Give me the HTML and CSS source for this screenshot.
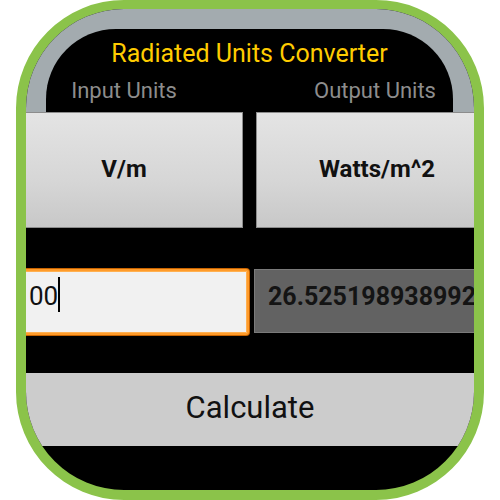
FILE: index.html
```html
<!DOCTYPE html>
<html>
<head>
<meta charset="utf-8">
<link rel="stylesheet" href="styles.css">
</head>
<body>
<div class="icon">
  <div class="bezel">
    <div class="panel">
      <div class="title">Radiated Units Converter</div>
      <div class="labels">
        <div>Input Units</div>
        <div>Output Units</div>
      </div>
    </div>
  </div>
  <div class="units">
    <div class="unit-btn">V/m</div>
    <div class="unit-btn">Watts/m^2</div>
  </div>
  <div class="fields">
    <div class="input">00<span class="cursor"></span></div>
    <div class="output">26.525198938992</div>
  </div>
  <div class="calc">Calculate</div>
</div>
</body>
</html>
```

FILE: styles.css
```css
html, body {
  margin: 0;
  padding: 0;
  background: #ffffff;
}

body {
  width: 500px;
  height: 500px;
  overflow: hidden;
  font-family: Roboto, "Noto Sans", sans-serif;
}

.icon {
  box-sizing: border-box;
  margin-left: 16px;
  width: 468px;
  height: 500px;
  border: 10px solid #8bc34a;
  border-top-width: 9px;
  border-radius: 108px;
  background: #000000;
  overflow: hidden;
}

.bezel {
  background: #a3abaf;
  padding: 20px 21px 0 20px;
}

.panel {
  background: #000000;
  border-radius: 70px 70px 0 0;
  padding: 10px 0 8px;
}

.title {
  color: #ffcc00;
  font-size: 25px;
  line-height: 30px;
  text-align: center;
}

.labels {
  display: grid;
  grid-template-columns: 238px 1fr;
  column-gap: 13px;
  margin: 9px -45px 0 -41px;
  color: #8d8d8d;
  font-size: 22px;
  line-height: 26px;
  text-align: center;
}

.labels div:last-child {
  padding-right: 4px;
}

.units {
  display: grid;
  grid-template-columns: 238px 1fr;
  column-gap: 13px;
  margin: 0 -24px 0 -21px;
  height: 116px;
}

.unit-btn {
  box-sizing: border-box;
  border: 1px solid #8c8c8c;
  background: linear-gradient(#e4e4e4, #d6d6d6 60%, #c8c8c8);
  display: flex;
  align-items: center;
  justify-content: center;
  padding-bottom: 2px;
  color: #111111;
  font-weight: bold;
  font-size: 24px;
}

.fields {
  display: grid;
  grid-template-columns: 244px 1fr;
  column-gap: 5px;
  margin: 41px -24px 0 -21px;
  height: 66px;
}

.input {
  box-sizing: border-box;
  height: 66px;
  border: 2px solid #ff9b2a;
  border-radius: 3px;
  box-shadow: inset 0 0 0 1px #ffb050, 0 0 0 1px #c96400;
  background: #f1f1f1;
  padding: 6px 0 0 22px;
  color: #111111;
  font-size: 26px;
  line-height: 30px;
}

.cursor {
  display: inline-block;
  width: 2px;
  height: 35px;
  margin-left: 0;
  background: #000000;
  vertical-align: -7px;
}

.output {
  box-sizing: border-box;
  height: 64px;
  border: 1px solid #7a7a7a;
  background: #626262;
  padding: 12px 0 0 13px;
  color: #141414;
  font-weight: bold;
  font-size: 25px;
  line-height: 30px;
  white-space: nowrap;
  overflow: hidden;
}

.calc {
  margin-top: 38px;
  height: 73px;
  box-sizing: border-box;
  padding-bottom: 4px;
  background: #cccccc;
  color: #111111;
  font-size: 31px;
  line-height: 69px;
  text-align: center;
}
```
